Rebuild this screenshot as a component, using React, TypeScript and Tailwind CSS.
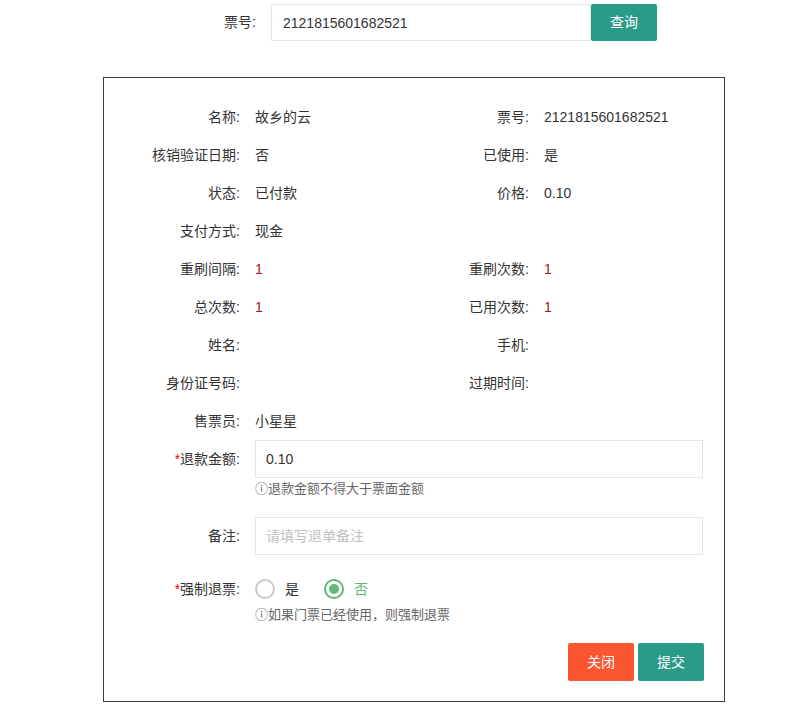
import { useState } from "react";

type Field = { label: string; value?: string; red?: boolean };

const rows: [Field, Field | null][] = [
  [{ label: "名称", value: "故乡的云" }, { label: "票号", value: "2121815601682521" }],
  [{ label: "核销验证日期", value: "否" }, { label: "已使用", value: "是" }],
  [{ label: "状态", value: "已付款" }, { label: "价格", value: "0.10" }],
  [{ label: "支付方式", value: "现金" }, null],
  [{ label: "重刷间隔", value: "1", red: true }, { label: "重刷次数", value: "1", red: true }],
  [{ label: "总次数", value: "1", red: true }, { label: "已用次数", value: "1", red: true }],
  [{ label: "姓名" }, { label: "手机" }],
  [{ label: "身份证号码" }, { label: "过期时间" }],
  [{ label: "售票员", value: "小星星" }, null],
];

function Cell({ f, first }: { f: Field; first: boolean }) {
  return (
    <div className={`flex items-center h-[38px] ${first ? "w-[289px]" : "flex-1"}`}>
      <div className="w-[136px] text-right shrink-0">{f.label}:</div>
      <div className={`ml-[15px] ${f.red ? "text-[#a0161b]" : ""}`}>{f.value ?? ""}</div>
    </div>
  );
}

function Radio({ checked, label, onClick }: { checked: boolean; label: string; onClick: () => void }) {
  return (
    <button type="button" onClick={onClick} className="flex items-center mr-[25px]">
      <span
        className={`w-[20px] h-[20px] rounded-full border-2 flex items-center justify-center ${
          checked ? "border-[#5fb878]" : "border-[#c9c9c9]"
        }`}
      >
        {checked && <span className="w-[10px] h-[10px] rounded-full bg-[#5fb878]" />}
      </span>
      <span className={`ml-[10px] ${checked ? "text-[#5fb878]" : "text-[#333]"}`}>{label}</span>
    </button>
  );
}

export default function App() {
  const [force, setForce] = useState(false);
  const [amount, setAmount] = useState("0.10");
  const [ticket, setTicket] = useState("2121815601682521");

  return (
    <div
      className="w-[810px] h-[717px] bg-white text-[14px] text-[#333] overflow-hidden"
      style={{ fontFamily: '"Liberation Sans", "Noto Sans CJK SC", sans-serif' }}
    >
      <div className="flex items-center pt-[4px]">
        <div className="w-[256px] text-right">票号:</div>
        <input
          value={ticket}
          onChange={(e) => setTicket(e.target.value)}
          className="ml-[15px] w-[320px] h-[37px] border border-[#e6e6e6] pl-[11px] outline-none"
        />
        <button className="w-[66px] h-[37px] bg-[#2a9a89] text-white rounded-[2px]">查询</button>
      </div>

      <div className="ml-[103px] mt-[36px] w-[622px] h-[625px] border border-[#343f3f] pt-[20px]">
        {rows.map(([a, b], i) => (
          <div key={i} className="flex">
            <Cell f={a} first />
            {b && <Cell f={b} first={false} />}
          </div>
        ))}

        <div className="flex items-center">
          <div className="w-[136px] text-right">
            <span className="text-[#ff0000]">*</span>退款金额:
          </div>
          <input
            value={amount}
            onChange={(e) => setAmount(e.target.value)}
            className="ml-[15px] w-[448px] h-[38px] border border-[#e6e6e6] pl-[10px] outline-none"
          />
        </div>
        <div className="ml-[151px] h-[22px] leading-[22px] text-[13px] text-[#666]">ⓘ退款金额不得大于票面金额</div>

        <div className="flex items-center mt-[17px]">
          <div className="w-[136px] text-right">备注:</div>
          <input
            placeholder="请填写退单备注"
            className="ml-[15px] w-[448px] h-[38px] border border-[#e6e6e6] pl-[10px] outline-none placeholder:text-[#c2c2c2]"
          />
        </div>

        <div className="flex items-center mt-[16px] h-[36px]">
          <div className="w-[136px] text-right">
            <span className="text-[#ff0000]">*</span>强制退票:
          </div>
          <div className="ml-[15px] flex items-center">
            <Radio checked={force} label="是" onClick={() => setForce(true)} />
            <Radio checked={!force} label="否" onClick={() => setForce(false)} />
          </div>
        </div>
        <div className="ml-[151px] h-[16px] leading-[16px] text-[13px] text-[#666]">ⓘ如果门票已经使用，则强制退票</div>

        <div className="flex justify-end gap-[4px] mt-[20px] mr-[20px]">
          <button className="w-[66px] h-[38px] bg-[#fb5630] text-white rounded-[2px]">关闭</button>
          <button className="w-[66px] h-[38px] bg-[#2a9a89] text-white rounded-[2px]">提交</button>
        </div>
      </div>
    </div>
  );
}
